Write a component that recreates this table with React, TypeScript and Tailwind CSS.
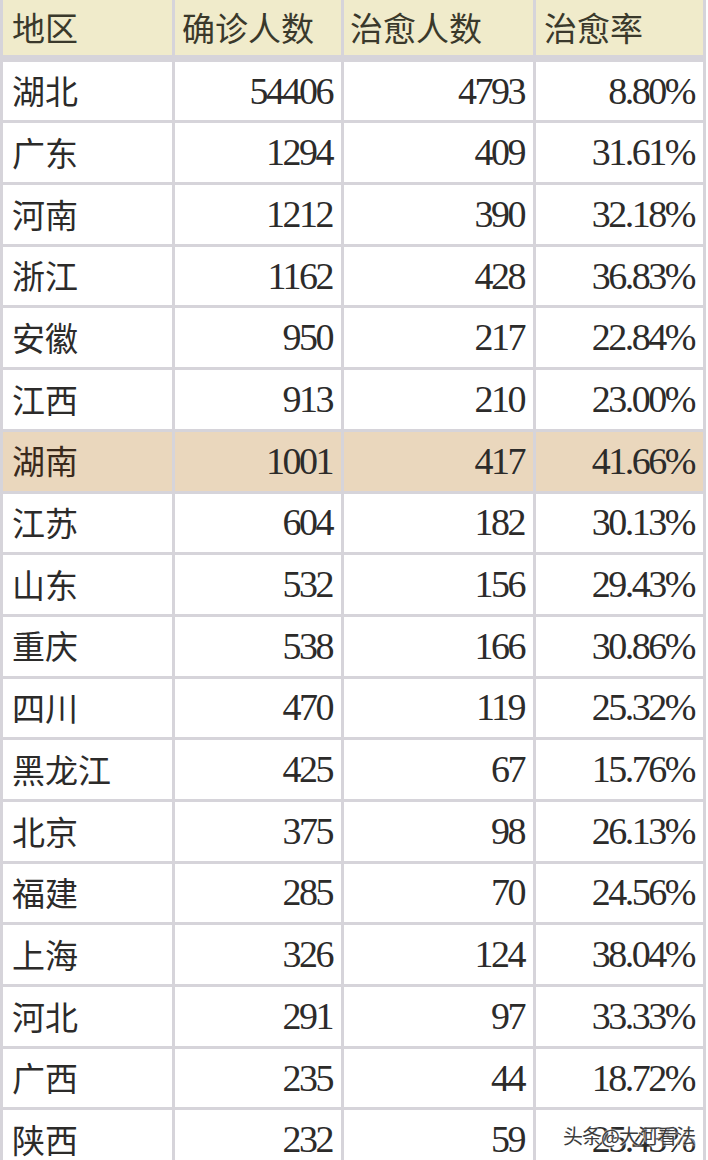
import React from "react";

type Row = { region: string; confirmed: string; cured: string; rate: string; highlight?: boolean };

const rows: Row[] = [
  { region: "湖北", confirmed: "54406", cured: "4793", rate: "8.80%" },
  { region: "广东", confirmed: "1294", cured: "409", rate: "31.61%" },
  { region: "河南", confirmed: "1212", cured: "390", rate: "32.18%" },
  { region: "浙江", confirmed: "1162", cured: "428", rate: "36.83%" },
  { region: "安徽", confirmed: "950", cured: "217", rate: "22.84%" },
  { region: "江西", confirmed: "913", cured: "210", rate: "23.00%" },
  { region: "湖南", confirmed: "1001", cured: "417", rate: "41.66%", highlight: true },
  { region: "江苏", confirmed: "604", cured: "182", rate: "30.13%" },
  { region: "山东", confirmed: "532", cured: "156", rate: "29.43%" },
  { region: "重庆", confirmed: "538", cured: "166", rate: "30.86%" },
  { region: "四川", confirmed: "470", cured: "119", rate: "25.32%" },
  { region: "黑龙江", confirmed: "425", cured: "67", rate: "15.76%" },
  { region: "北京", confirmed: "375", cured: "98", rate: "26.13%" },
  { region: "福建", confirmed: "285", cured: "70", rate: "24.56%" },
  { region: "上海", confirmed: "326", cured: "124", rate: "38.04%" },
  { region: "河北", confirmed: "291", cured: "97", rate: "33.33%" },
  { region: "广西", confirmed: "235", cured: "44", rate: "18.72%" },
  { region: "陕西", confirmed: "232", cured: "59", rate: "25.43%" },
];

const cjk = "font-['Noto_Sans_CJK_SC',sans-serif]";
const num = "font-['Liberation_Serif',serif] text-[38px] tracking-[-2.5px] text-right pr-[9px]";

const Cell = ({ children, className }: { children: React.ReactNode; className?: string }) => (
  <div className={`flex items-center ${className ?? ""}`}>{children}</div>
);

export default function App() {
  return (
    <div className="w-[708px] h-[1160px] overflow-hidden bg-white">
      <div className="relative w-[706px] bg-[#d6d4da] px-[3px] grid grid-cols-[169px_166px_189px_167px] gap-[3px] auto-rows-[58.7px] text-[#2c2b2a]">
        {/* header */}
        <Cell className={`h-[55px] bg-[#f0ebcb] pl-[9px] text-[33px] text-[#3a392b] ${cjk}`}>地区</Cell>
        <Cell className={`h-[55px] bg-[#f0ebcb] pl-[7px] text-[33px] text-[#3a392b] ${cjk}`}>确诊人数</Cell>
        <Cell className={`h-[55px] bg-[#f0ebcb] pl-[6px] text-[33px] text-[#3a392b] ${cjk}`}>治愈人数</Cell>
        <Cell className={`h-[55px] bg-[#f0ebcb] pl-[8px] text-[33px] text-[#3a392b] ${cjk}`}>治愈率</Cell>

        {rows.map((r) => {
          const bg = r.highlight ? "bg-[#ead7bd]" : "bg-white";
          return (
            <React.Fragment key={r.region}>
              <Cell className={`${bg} pl-[9px] text-[33px] ${cjk} ${r.highlight ? "text-[#3a2a1c]" : ""}`}>
                {r.region}
              </Cell>
              <Cell className={`${bg} justify-end ${num}`}>{r.confirmed}</Cell>
              <Cell className={`${bg} justify-end ${num}`}>{r.cured}</Cell>
              <Cell className={`${bg} justify-end ${num}`}>{r.rate}</Cell>
            </React.Fragment>
          );
        })}

        {/* watermark */}
        <div className="absolute left-[563px] top-[1121px] whitespace-nowrap text-[20px] tracking-[-1px] text-[#3d3d3d] [text-shadow:0_0_2px_#fff,0_0_2px_#fff] font-['Noto_Sans_CJK_SC',sans-serif]">
          头条@大河看法
        </div>
      </div>
    </div>
  );
}
